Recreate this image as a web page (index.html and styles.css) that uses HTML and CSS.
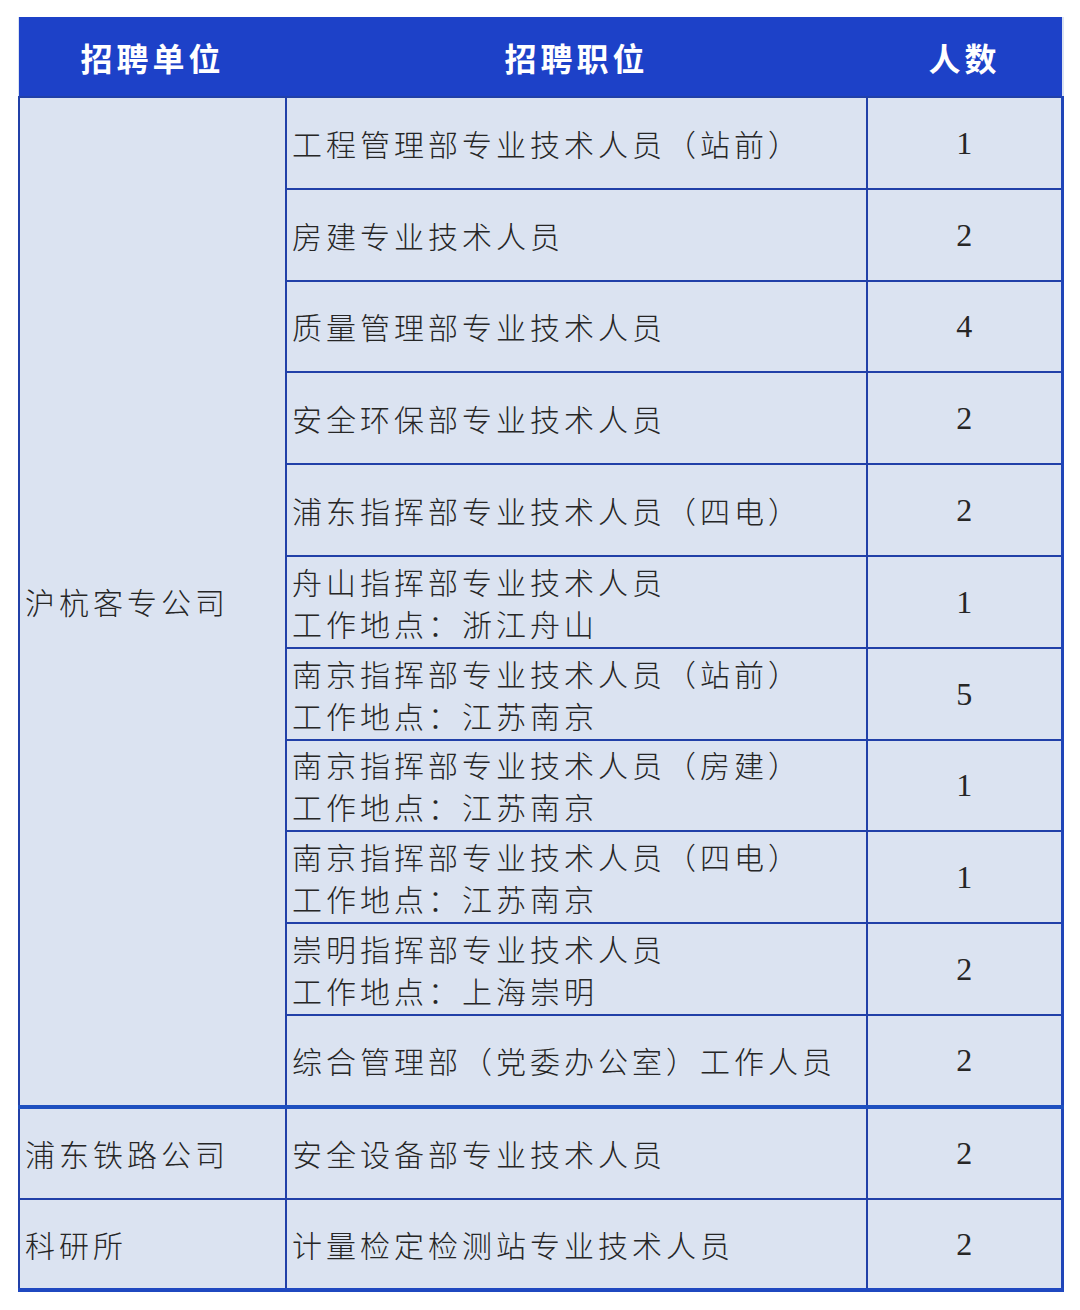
FILE: index.html
```html
<!DOCTYPE html>
<html lang="zh-CN">
<head>
<meta charset="utf-8">
<title>招聘岗位</title>
<link rel="stylesheet" href="styles.css">
</head>
<body>
<table class="jobs">
  <colgroup>
    <col class="c-unit">
    <col class="c-pos">
    <col class="c-num">
  </colgroup>
  <thead>
    <tr class="head">
      <th>招聘单位</th>
      <th>招聘职位</th>
      <th>人数</th>
    </tr>
  </thead>
  <tbody>
    <tr>
      <td class="unit" rowspan="11">沪杭客专公司</td>
      <td class="pos">工程管理部专业技术人员（站前）</td>
      <td class="num">1</td>
    </tr>
    <tr><td class="pos">房建专业技术人员</td><td class="num">2</td></tr>
    <tr><td class="pos">质量管理部专业技术人员</td><td class="num">4</td></tr>
    <tr><td class="pos">安全环保部专业技术人员</td><td class="num">2</td></tr>
    <tr><td class="pos">浦东指挥部专业技术人员（四电）</td><td class="num">2</td></tr>
    <tr><td class="pos two">舟山指挥部专业技术人员<br>工作地点：浙江舟山</td><td class="num">1</td></tr>
    <tr><td class="pos two">南京指挥部专业技术人员（站前）<br>工作地点：江苏南京</td><td class="num">5</td></tr>
    <tr><td class="pos two">南京指挥部专业技术人员（房建）<br>工作地点：江苏南京</td><td class="num">1</td></tr>
    <tr><td class="pos two">南京指挥部专业技术人员（四电）<br>工作地点：江苏南京</td><td class="num">1</td></tr>
    <tr><td class="pos two">崇明指挥部专业技术人员<br>工作地点：上海崇明</td><td class="num">2</td></tr>
    <tr class="group-end"><td class="pos">综合管理部（党委办公室）工作人员</td><td class="num">2</td></tr>
    <tr>
      <td class="unit">浦东铁路公司</td>
      <td class="pos">安全设备部专业技术人员</td>
      <td class="num">2</td>
    </tr>
    <tr class="last">
      <td class="unit">科研所</td>
      <td class="pos">计量检定检测站专业技术人员</td>
      <td class="num">2</td>
    </tr>
  </tbody>
</table>
</body>
</html>
```

FILE: styles.css
```css
html, body {
  margin: 0;
  padding: 0;
  background: #ffffff;
}

body {
  padding: 17px 0 0 18px;
  font-family: "Noto Sans CJK SC", "Noto Sans", sans-serif;
  color: #262626;
}

.jobs {
  border-collapse: collapse;
  width: 1043px;
  table-layout: fixed;
  background: #dbe3f1;
}

.c-unit { width: 267px; }
.c-pos { width: 581px; }
.c-num { width: 195px; }

.head th {
  height: 79px;
  padding: 0;
  background: #1d41c8;
  color: #ffffff;
  font-size: 32px;
  font-weight: 700;
  letter-spacing: 4px;
  text-align: center;
  border: 0;
}

.jobs td {
  height: 91.8px;
  box-sizing: border-box;
  padding: 0 4px 0 5px;
  border: 2px solid #2140a8;
  font-size: 30px;
  font-weight: 300;
  letter-spacing: 4px;
  line-height: 42px;
  vertical-align: middle;
  white-space: nowrap;
}

.jobs td.num {
  text-align: center;
  font-family: "Liberation Serif", "DejaVu Serif", serif;
  font-size: 32px;
  font-weight: 400;
  letter-spacing: 0;
  padding: 0;
  border-right: 3px solid #1f45b8;
}

.jobs tr.group-end td,
.jobs td.unit[rowspan] {
  border-bottom: 4px solid #1e50c0;
}

.jobs tr.last td {
  border-bottom: 4px solid #1f48c0;
}
```
